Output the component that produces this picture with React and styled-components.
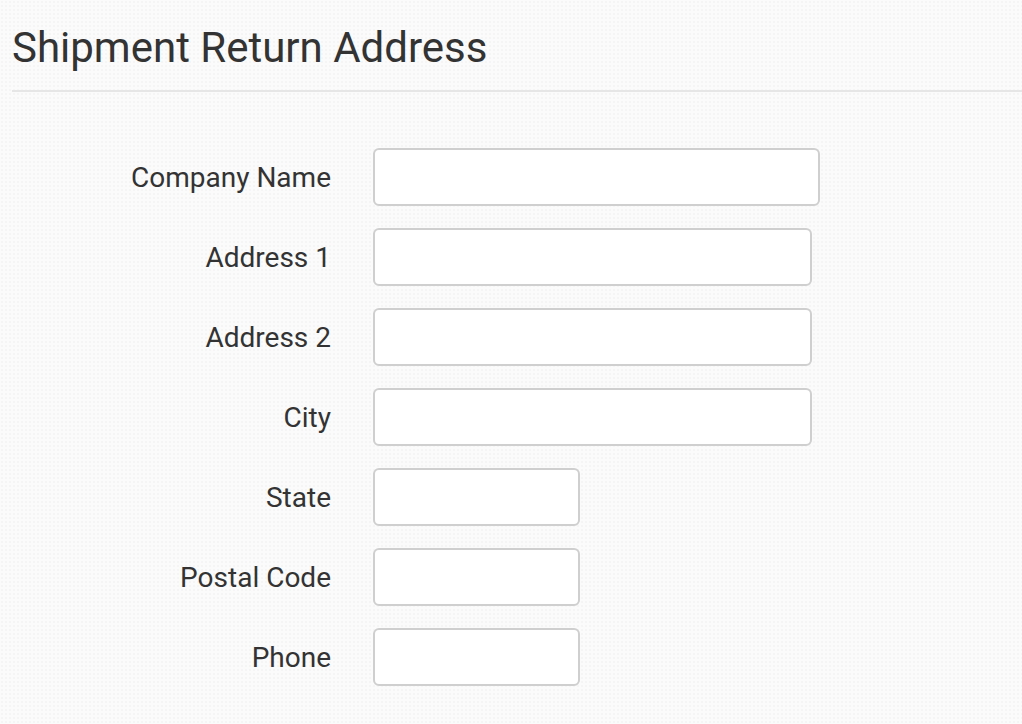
import React from "react";
import styled, { createGlobalStyle } from "styled-components";

const Global = createGlobalStyle`
  html, body { margin: 0; padding: 0; }
  body {
    background-color: #fbfbfb;
    background-image: radial-gradient(rgba(0,0,0,0.025) 1px, transparent 1.2px);
    background-size: 4px 4px;
    font-family: Roboto, "Liberation Sans", sans-serif;
    color: #333;
    width: 1022px;
    height: 724px;
    overflow: hidden;
  }
`;

const Page = styled.div`
  padding: 26px 0 0 12px;
`;

const Title = styled.h1`
  margin: 0;
  font-size: 42px;
  font-weight: 400;
  line-height: 44px;
  color: #333;
  padding-bottom: 20px;
  border-bottom: 2px solid #e6e6e6;
`;

const Form = styled.form`
  display: grid;
  grid-template-columns: 319px auto;
  column-gap: 42px;
  row-gap: 22px;
  padding-top: 56px;
  justify-content: start;
`;

const Label = styled.label`
  font-size: 28px;
  text-align: right;
  align-self: center;
  color: #333;
`;

const Input = styled.input`
  box-sizing: border-box;
  width: ${(p) => p.$w}px;
  height: 58px;
  border: 2px solid #cfcfcf;
  border-radius: 6px;
  background: #fff;
  outline: none;
  font-family: inherit;
  font-size: 24px;
  padding: 0 12px;
`;

const fields = [
  ["Company Name", 447],
  ["Address 1", 439],
  ["Address 2", 439],
  ["City", 439],
  ["State", 207],
  ["Postal Code", 207],
  ["Phone", 207],
];

export default function App() {
  return (
    <Page>
      <Global />
      <Title>Shipment Return Address</Title>
      <Form onSubmit={(e) => e.preventDefault()}>
        {fields.map(([label, w]) => (
          <React.Fragment key={label}>
            <Label>{label}</Label>
            <Input $w={w} type="text" />
          </React.Fragment>
        ))}
      </Form>
    </Page>
  );
}
